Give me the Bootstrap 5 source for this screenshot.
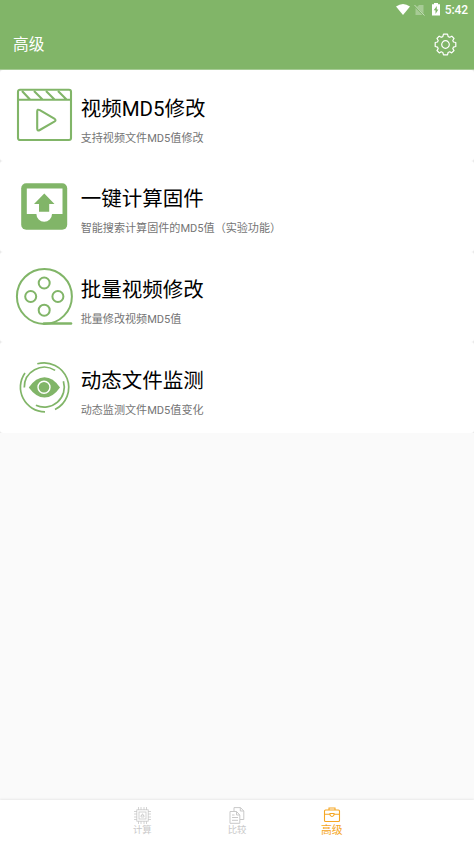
<!DOCTYPE html>
<html lang="zh-CN">
<head>
<meta charset="utf-8">
<meta name="viewport" content="width=device-width, initial-scale=1">
<title>高级</title>
<link href="https://cdn.jsdelivr.net/npm/bootstrap@5.3.0/dist/css/bootstrap.min.css" rel="stylesheet">
<style>
:root { --leaf: #81b568; }
body { font-family: Roboto, "Noto Sans CJK SC", sans-serif; background: #fafafa; height: 100vh; overflow: hidden; }
svg { display: block; flex: none; }
.top-area { background: var(--leaf); height: 70px; border-bottom: 1px solid #a6cb95; }
.status-line { height: 19px; padding-right: 6px; font-size: 12px; line-height: 19px; }
.status-line span { padding-top: 1px; margin-left: 2px; font-weight: 500; letter-spacing: -.1px; }
.app-line { height: 50px; padding: 0 17px 0 13px; }
.app-title { font-size: 15.7px; line-height: 20px; padding-top: 2px; }
.feature-list { background: #e9e9e9; }
.feature { height: 90.75px; border-radius: 3px; padding-left: 14px; }
.feature-icon { width: 60px; height: 60px; color: var(--leaf); }
.feature-text { margin-left: 6.7px; padding-top: 23.6px; }
.feature-title { font-size: 20.5px; line-height: 30px; color: #000; }
.feature-note { font-size: 11.08px; line-height: 16px; margin-top: 7px; color: #757575; }
.tab-bar { height: 44px; padding: 0 95px; box-shadow: 0 -1px 2px rgba(0,0,0,.07); }
.tab-item { color: #c9c9c9; font-size: 9.4px; line-height: 12px; padding-top: 7px; }
.tab-item.current { color: #f5a623; font-size: 10.8px; padding-top: 6px; }
.tab-item.current span { padding-top: 1px; }
</style>
<script src="https://cdn.jsdelivr.net/npm/bootstrap@5.3.0/dist/js/bootstrap.bundle.min.js"></script>
</head>
<body class="d-flex flex-column">
<header class="top-area text-white flex-shrink-0">
  <div class="status-line d-flex align-items-center justify-content-end">
    <svg width="14" height="11" viewBox="0 0 14 11" fill="#fff"><path d="M0 2.500Q7-2.500 14 2.500L7 11z"/></svg>
    <svg class="ms-1" width="11" height="12" viewBox="0 0 11 12"><path d="M9.500 1v8.500L3 3l2-2zM1.500 4l7 7h-7z" fill="#fff" opacity=".3"/><path d="M.5 1l10 10.500" stroke="#fff" opacity=".55"/></svg>
    <svg class="ms-1" width="14" height="13" viewBox="0 0 14 13"><path d="M5 0h4v1.300h2V12.500H3V1.300h2z" fill="#fff"/><path d="M7.800 3L4.700 7.200h1.800V11L9.400 6.400H7.800z" fill="#81b568"/></svg>
    <span>5:42</span>
  </div>
  <div class="app-line d-flex align-items-center justify-content-between">
    <span class="app-title">高级</span>
    <svg width="23" height="23" viewBox="-11.500 -11.500 23 23" fill="none" stroke="#fff" stroke-width="1.200" stroke-linejoin="round"><circle r="3.800"/><path d="M-2-10.300H2L2.700-7.900L4.300-7.200L6.300-8.300L8.500-6L7.300-4L8-2.500L10.300-2V2L8 2.600L7.300 4.200L8.500 6L6.200 8.400L4.200 7.300L2.600 8L2 10.300H-2L-2.700 8L-4.300 7.300L-6.200 8.400L-8.500 6L-7.300 4.200L-8 2.600L-10.300 2V-2L-8-2.500L-7.300-4L-8.500-6L-6.300-8.300L-4.300-7.200L-2.700-7.900Z"/></svg>
  </div>
</header>

<main class="flex-grow-1">
  <div class="feature-list">
    <section class="feature bg-white d-flex">
      <svg class="feature-icon align-self-center" viewBox="0 0 60 60" fill="none" stroke="currentColor" stroke-width="2.100"><rect x="4" y="4.700" width="53" height="50.300" rx="2"/><path d="M4 14.800h53M8 6l8 8.500M20 6l8.500 8.500M32 6l8.500 8.500M44 6l8.500 8.500"/><path d="M23.200 26.500v17q0 3 2.600 1.500l14.500-8.300q2.400-1.500 0-3l-14.500-8.500q-2.600-1.500-2.600 1.300z"/></svg>
      <div class="feature-text"><div class="feature-title">视频MD5修改</div><div class="feature-note">支持视频文件MD5值修改</div></div>
    </section>
    <section class="feature bg-white d-flex">
      <svg class="feature-icon align-self-center" viewBox="0 0 60 60"><rect x="7.200" y="7.300" width="46" height="46.500" rx="5" fill="currentColor"/><path d="M12.800 12.500h35.700V38h-10.500a7.800 7.800 0 0 1-15.600 0h-9.600z" fill="#fff"/><path d="M30.300 17.500L40.500 28h-5.300v7.800H25V28h-5z" fill="currentColor"/></svg>
      <div class="feature-text"><div class="feature-title">一键计算固件</div><div class="feature-note">智能搜索计算固件的MD5值（实验功能）</div></div>
    </section>
    <section class="feature bg-white d-flex">
      <svg class="feature-icon align-self-center" viewBox="0 0 60 60" fill="none" stroke="currentColor" stroke-width="2"><circle cx="30.400" cy="29.400" r="27.500"/><circle cx="30.200" cy="16" r="5.500"/><circle cx="16.700" cy="29.500" r="5.500"/><circle cx="43.900" cy="29.500" r="5.500"/><circle cx="30.200" cy="43.200" r="5.500"/><path d="M30 56.500h27" stroke-width="2.600" stroke-linecap="round"/></svg>
      <div class="feature-text"><div class="feature-title">批量视频修改</div><div class="feature-note">批量修改视频MD5值</div></div>
    </section>
    <section class="feature bg-white d-flex">
      <svg class="feature-icon align-self-center" viewBox="0 0 60 60" fill="none" stroke="currentColor" stroke-width="1.700"><path d="M23.300 5.800A24.600 24.600 0 0 1 41 51.500M11 14.900A24.600 24.600 0 0 0 31 53.800M41.100 12.400A20 20 0 0 0 10.300 29.500M21.900 47.300A20 20 0 0 0 49.400 23.200"/><path d="M14.800 29.500Q22 19.300 30.500 19.300T46 29.500Q39 39.500 30.500 39.500T14.800 29.500z" fill="currentColor" stroke="none"/><circle cx="30" cy="29.300" r="6" stroke="#fff" stroke-width="1.400"/></svg>
      <div class="feature-text"><div class="feature-title">动态文件监测</div><div class="feature-note">动态监测文件MD5值变化</div></div>
    </section>
  </div>
</main>

<nav class="tab-bar bg-white d-flex flex-shrink-0">
  <div class="tab-item flex-fill w-100 d-flex flex-column align-items-center">
    <svg width="17" height="17" viewBox="0 0 17 17" fill="none" stroke="currentColor" stroke-width=".8"><rect x="2.800" y="2.800" width="11.400" height="11.400"/><rect x="5" y="5" width="7" height="7"/><path d="M4.500 0v3M7 0v3M10 0v3M12.500 0v3M4.500 14v3M7 14v3M10 14v3M12.500 14v3M0 4.500h3M0 7h3M0 10h3M0 12.500h3M14 4.500h3M14 7h3M14 10h3M14 12.500h3M7 10V8.500h1V7h1v1.500h1V10z"/></svg>
    <span>计算</span>
  </div>
  <div class="tab-item flex-fill w-100 d-flex flex-column align-items-center">
    <svg width="16" height="17" viewBox="0 0 16 17" fill="none" stroke="currentColor"><path d="M5 4V.6h6.500L14.800 4v8.500H11M11.300.6V4h3.500M1 4.500h6.500L10.800 8v8.300H1zM7.500 4.500V8h3.300M3 8h2.500M3 10.500h6M3 13.300h6"/></svg>
    <span>比较</span>
  </div>
  <div class="tab-item current flex-fill w-100 d-flex flex-column align-items-center">
    <svg width="18" height="18" viewBox="0 0 18 18" fill="none" stroke="currentColor" stroke-width="1.100"><rect x="1.500" y="4" width="15" height="11.500" rx="1"/><path d="M6 4V2h6v2M1.500 8.200H7M11 8.200h5.500M7 7.500h4V9q-2 3-4 0z"/></svg>
    <span>高级</span>
  </div>
</nav>
</body>
</html>
